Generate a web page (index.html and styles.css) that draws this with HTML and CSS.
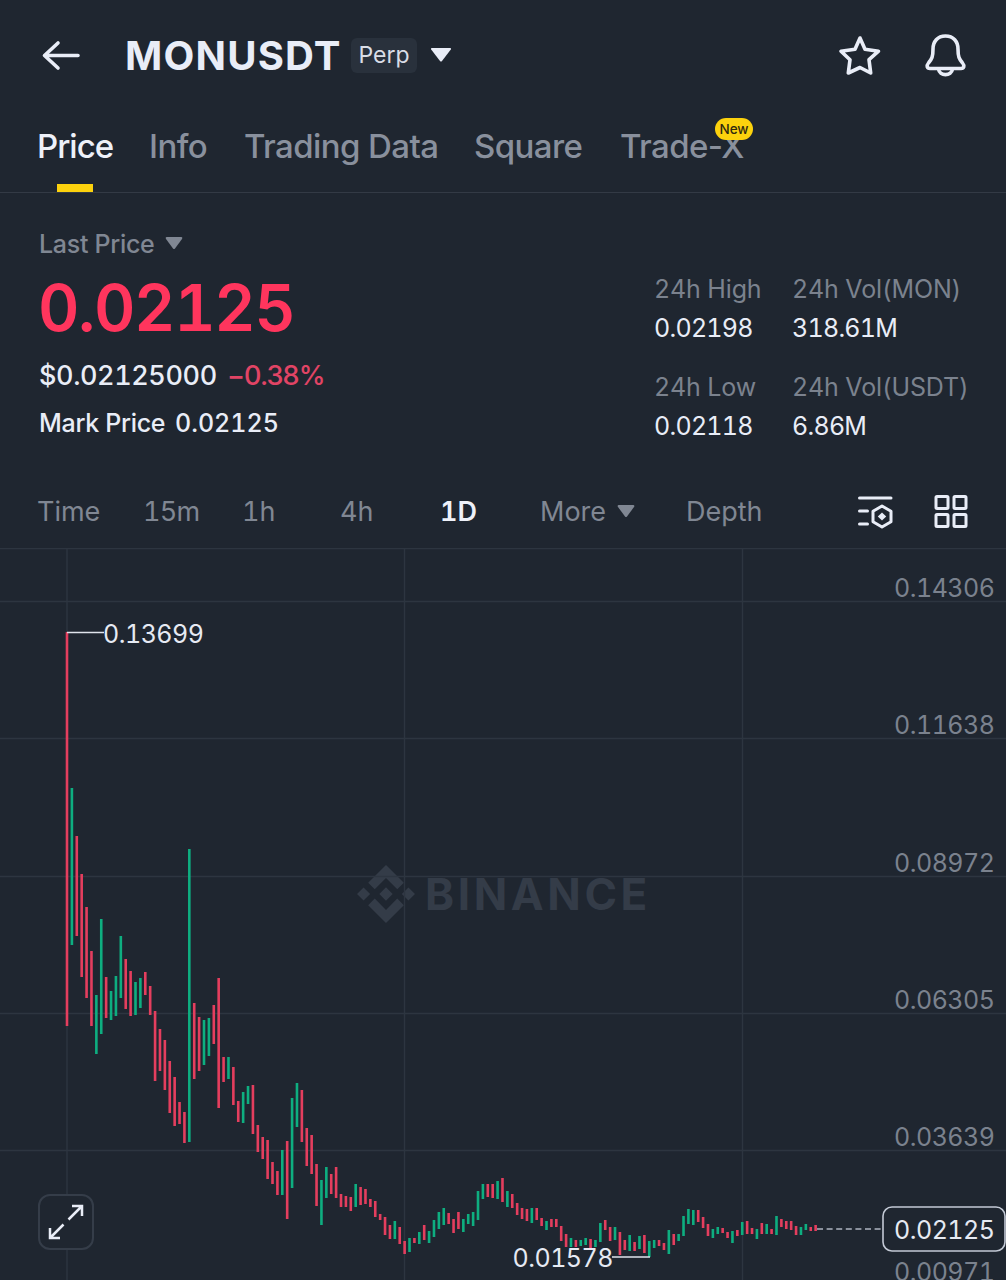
FILE: index.html
```html
<!DOCTYPE html>
<html lang="en">
<head>
    <meta charset="UTF-8">
    <meta name="viewport" content="width=device-width, initial-scale=1.0">
    <title>MONUSDT Perp</title>
    <link rel="stylesheet" href="styles.css">
</head>
<body>
    <header class="header">
        <svg class="back" width="40" height="32" viewBox="0 0 40 32"><path d="M37 16.500H3.500M17 4L3.500 16.500 17 29"/></svg>
        <h1>MONUSDT</h1>
        <span class="perp">Perp</span>
        <svg class="arrow-big" width="22" height="16" viewBox="0 0 22 16"><path d="M1.500 1h19q1 .5.3 1.500L12 14q-1 1-2 0L1.200 2.500Q.5 1.500 1.500 1z"/></svg>
        <div class="header-icons">
            <svg width="46" height="46" viewBox="0 0 46 46"><path d="M23 6l5 11.200 13.500 2-9.500 8.500 1.700 13.300L23 35.500 11.300 41 13 27.700 4 19.200l14-2z"/></svg>
            <svg width="46" height="46" viewBox="0 0 46 46"><path d="M22.500 4C14.500 4 10 9.500 10 17c0 8-1.200 10-4.200 13.500C3 34 4 36.500 7 36.500h31c3 0 4-2.500 1.200-6C36.200 27 35 25 35 17 35 9.500 30.500 4 22.500 4z"/><path d="M15.500 37c1 7.500 13 7.500 14 0"/></svg>
        </div>
    </header>

    <nav class="tabs">
        <a class="tab active">Price</a>
        <a class="tab info">Info</a>
        <a class="tab">Trading Data</a>
        <a class="tab square">Square</a>
        <a class="tab">Trade-X<span class="badge">New</span></a>
    </nav>

    <section class="summary">
        <div class="price-box">
            <div class="last">Last Price <svg width="18" height="13" viewBox="0 0 18 13"><path d="M1.500 0h15q1.500.5.5 2L10 11.500q-1 1-2 0L1 2Q0 .5 1.500 0z"/></svg></div>
            <div class="price">0.02125</div>
            <div class="fiat"><span class="usd">$0.02125000</span><span class="change">−0.38%</span></div>
            <div class="mark"><span>Mark Price</span><span class="mark-value">0.02125</span></div>
        </div>
        <dl class="stats">
            <div><dt>24h High</dt><dd>0.02198</dd></div>
            <div><dt>24h Vol(MON)</dt><dd>318.61M</dd></div>
            <div><dt>24h Low</dt><dd>0.02118</dd></div>
            <div><dt>24h Vol(USDT)</dt><dd>6.86M</dd></div>
        </dl>
    </section>

    <nav class="intervals">
        <span>Time</span>
        <span class="minutes">15m</span>
        <span>1h</span>
        <span>4h</span>
        <span class="selected">1D</span>
        <span>More <svg class="more-arrow" width="18" height="13" viewBox="0 0 18 13"><path d="M1.500 0h15q1.500.5.5 2L10 11.500q-1 1-2 0L1 2Q0 .5 1.500 0z"/></svg></span>
        <span>Depth</span>
        <svg class="tool" width="36" height="34" viewBox="0 0 36 34"><path d="M2.500 3h31.500M2.500 16h8M2.500 29h8M25 11l9 5.200v10.600L25 32l-9-5.200V16.200z"/><path class="dot" d="M25 17.500l4.200 4-4.200 4-4.200-4z"/></svg>
        <svg class="tool" width="34" height="34" viewBox="0 0 34 34"><rect x="2" y="1.500" width="12" height="12" rx="1"/><rect x="20" y="1.500" width="12" height="12" rx="1"/><rect x="2" y="19.500" width="12" height="12" rx="1"/><rect x="20" y="19.500" width="12" height="12" rx="1"/></svg>
    </nav>

    <main class="chart-box">
        <svg class="chart" width="1006" height="732" viewBox="0 548 1006 732">
            <g class="watermark">
                <path transform="translate(357 865) scale(.458)" d="M38.730 53.200l24.590-24.580 24.600 24.600 14.300-14.310L63.320 0 24.420 38.900zM0 63.310l14.300-14.310 14.310 14.310-14.310 14.300zM38.730 73.410l24.590 24.590 24.600-24.600 14.310 14.290-38.910 38.910-38.900-38.880zM98 63.310l14.300-14.310 14.310 14.300-14.310 14.320zM77.830 63.300L63.320 48.780 48.800 63.300 63.320 77.830z"/>
                <text x="425" y="909.500">BINANCE</text>
            </g>
            <path class="grid" d="M0 548.500H1006M0 601.500H1006M0 738.500H1006M0 876.500H1006M0 1013.500H1006M0 1150.500H1006M67 548V1280M404.500 548V1280M742.500 548V1280"/>
            <g id="candles"></g>
            <path class="pointer" d="M67 632.500H104M612 1257H650"/>
            <path class="current-line" d="M817 1229H883"/>
            <g class="axis">
                <text x="894" y="597">0.14306</text>
                <text x="894" y="734">0.11638</text>
                <text x="894" y="872">0.08972</text>
                <text x="894" y="1009">0.06305</text>
                <text x="894" y="1146">0.03639</text>
                <text x="894" y="1281">0.00971</text>
            </g>
            <rect class="current-box" x="883" y="1207" width="122" height="44" rx="9"/>
            <g class="values">
                <text x="103" y="642.500">0.13699</text>
                <text x="512.500" y="1267">0.01578</text>
                <text x="894" y="1239">0.02125</text>
            </g>
        </svg>
        <button class="expand" aria-label="Full screen">
            <svg width="36" height="36" viewBox="0 0 36 36"><path d="M20.500 15.500L34 2M24 2h10v10M15.500 20.500L2 34M2 24v10h10"/></svg>
        </button>
    </main>

    <script>
        // high, low, direction (1 = up, 0 = down)
        const candles = [
            [632,1026,0],[788,945,1],[836,936,0],[874,977,0],[907,998,0],[951,1026,0],[995,1054,1],[919,1034,1],
            [977,1018,0],[991,1020,1],[976,1016,1],[936,998,1],[959,1009,0],[971,1016,0],[982,1015,1],[978,1008,1],
            [972,995,0],[986,1015,0],[1011,1081,0],[1029,1071,0],[1040,1090,0],[1061,1113,0],[1077,1126,0],[1102,1124,0],
            [1112,1143,0],[849,1142,1],[1003,1079,0],[1017,1071,0],[1020,1065,1],[1018,1056,1],[1005,1044,0],[978,1108,0],
            [1057,1082,0],[1057,1079,1],[1067,1105,0],[1101,1122,0],[1092,1123,1],[1086,1104,1],[1085,1134,0],[1125,1152,0],
            [1137,1159,0],[1140,1179,0],[1162,1184,0],[1171,1195,0],[1150,1195,1],[1141,1219,0],[1098,1188,1],[1083,1127,1],
            [1090,1142,0],[1128,1166,0],[1135,1174,0],[1164,1206,0],[1180,1225,1],[1167,1198,1],[1174,1194,0],[1167,1198,0],
            [1194,1207,0],[1196,1207,0],[1197,1211,0],[1184,1207,1],[1187,1205,0],[1189,1204,0],[1199,1207,0],[1201,1217,0],
            [1214,1220,0],[1217,1235,0],[1225,1239,0],[1221,1239,1],[1227,1244,0],[1241,1254,0],[1238,1252,1],[1238,1243,0],
            [1232,1244,1],[1225,1240,0],[1231,1243,1],[1220,1237,1],[1212,1229,1],[1208,1225,1],[1213,1224,0],[1219,1233,0],
            [1212,1229,0],[1219,1232,1],[1214,1224,1],[1212,1226,1],[1191,1220,1],[1184,1199,1],[1184,1197,0],[1184,1198,0],
            [1181,1199,1],[1178,1202,0],[1191,1207,1],[1194,1208,0],[1203,1215,0],[1208,1219,0],[1209,1221,0],[1208,1223,1],
            [1208,1220,0],[1218,1226,0],[1221,1230,1],[1219,1227,0],[1219,1227,0],[1226,1241,0],[1234,1247,0],[1238,1247,1],
            [1240,1247,0],[1240,1246,1],[1238,1245,1],[1239,1249,0],[1240,1247,1],[1223,1242,1],[1220,1230,0],[1227,1241,0],
            [1227,1240,1],[1232,1255,0],[1240,1250,0],[1235,1251,1],[1242,1251,0],[1236,1249,1],[1235,1253,0],[1241,1257,1],
            [1240,1248,1],[1240,1246,0],[1243,1250,0],[1230,1254,1],[1234,1245,0],[1234,1241,1],[1216,1236,1],[1209,1224,1],
            [1210,1225,1],[1210,1222,0],[1217,1228,0],[1224,1236,0],[1229,1238,1],[1227,1234,1],[1228,1233,0],[1232,1238,0],
            [1231,1243,1],[1230,1236,0],[1222,1235,1],[1221,1234,0],[1228,1234,0],[1229,1239,1],[1223,1234,0],[1224,1234,1],
            [1229,1234,0],[1216,1235,1],[1219,1227,0],[1221,1229,0],[1221,1230,0],[1226,1235,0],[1227,1235,1],[1224,1230,1],
            [1227,1231,0],[1225,1231,0]
        ];
        const step = 4.893;
        const group = document.getElementById('candles');

        candles.forEach(function(candle, i) {
            const bar = document.createElementNS('http://www.w3.org/2000/svg', 'rect');
            bar.setAttribute('x', (67 + i * step - 1.3).toFixed(2));
            bar.setAttribute('y', candle[0]);
            bar.setAttribute('width', 2.6);
            bar.setAttribute('height', candle[1] - candle[0]);
            bar.setAttribute('class', candle[2] ? 'up' : 'down');
            group.appendChild(bar);
        });
    </script>
</body>
</html>
```
FILE: styles.css
```css
* {
    box-sizing: border-box;
}

body {
    margin: 0;
    width: 1006px;
    height: 1280px;
    overflow: hidden;
    background-color: #1f2630;
    color: #e9edf7;
    font-family: Inter, "Open Sans", sans-serif;
    font-variant-numeric: tabular-nums;
}

svg {
    display: block;
}

/* Header */
.header {
    display: flex;
    align-items: center;
    height: 110px;
    padding: 0 37px 0 41px;
}

.header svg {
    fill: none;
    stroke: #e9edf7;
    stroke-width: 3.6;
    stroke-linecap: round;
    stroke-linejoin: round;
}

h1 {
    width: 226px;
    margin: 0 0 0 44px;
    font-size: 40px;
    font-weight: 650;
    letter-spacing: 1.2px;
    white-space: nowrap;
}

.perp {
    width: 66px;
    height: 35px;
    line-height: 35px;
    border-radius: 6px;
    background-color: #29313c;
    color: #d9dde6;
    font-size: 23px;
    text-align: center;
}

.header .arrow-big {
    margin: 0 0 0 13px;
    fill: #e9edf7;
    stroke: none;
}

.header-icons {
    display: flex;
    gap: 40px;
    margin-left: auto;
}

/* Tabs */
.tabs {
    display: grid;
    grid-template-columns: 112px 95px 230px 146px 130px;
    height: 83px;
    padding-left: 37px;
    border-bottom: 1px solid #333a45;
    font-variant-numeric: normal;
}

.tab {
    position: relative;
    padding-top: 16px;
    color: #89909d;
    font-size: 33px;
    font-weight: 500;
    line-height: 40px;
    letter-spacing: -0.6px;
    white-space: nowrap;
}

.tab.active {
    color: #eef1f9;
    letter-spacing: -1px;
}

.tab.active::after {
    content: "";
    position: absolute;
    left: 20px;
    bottom: 0;
    width: 36px;
    height: 8px;
    background-color: #fcd20d;
}

.badge {
    position: absolute;
    left: 95px;
    top: 8px;
    width: 38px;
    height: 22px;
    border-radius: 11px;
    background-color: #fcd20d;
    color: #302a10;
    font-size: 13.5px;
    line-height: 22px;
    letter-spacing: 0;
    text-align: center;
}

/* Price summary */
.summary {
    display: flex;
    justify-content: space-between;
    height: 282px;
    padding: 34px 33px 0 39px;
}

.last {
    display: flex;
    align-items: center;
    gap: 11px;
    height: 34px;
    color: #808793;
    font-size: 25px;
    font-weight: 500;
    letter-spacing: -0.3px;
}

.last svg {
    margin-top: -2px;
}

.last svg,
.more-arrow {
    fill: #808793;
}

.price {
    height: 88px;
    margin-left: -1px;
    color: #ff355d;
    font-size: 64px;
    font-weight: 600;
    line-height: 93px;
    letter-spacing: -1.3px;
    white-space: nowrap;
}

.fiat,
.mark {
    display: flex;
    height: 48px;
    font-size: 27px;
    font-weight: 500;
    line-height: 54px;
    white-space: nowrap;
}

.usd {
    width: 188px;
    letter-spacing: -0.4px;
}

.change {
    color: #e14465;
    font-variant-numeric: normal;
    letter-spacing: -0.9px;
}

.mark {
    font-size: 25px;
    line-height: 52px;
}

.mark span:first-child {
    width: 136px;
    letter-spacing: -0.3px;
}

.stats {
    display: grid;
    grid-template-columns: 138px 181px;
    grid-auto-rows: 98px;
    margin: 43px 0 0;
}

.stats dt,
.stats dd {
    margin: 0;
    height: 39px;
    font-size: 25px;
    line-height: 39px;
    letter-spacing: -0.75px;
    white-space: nowrap;
}

.stats dt {
    color: #7b828e;
    letter-spacing: -0.15px;
}

/* Intervals */
.intervals {
    display: grid;
    grid-template-columns: 106px 99px 98px 100px 100px 146px 171px 77px 34px;
    align-items: center;
    height: 73px;
    padding-left: 37px;
    color: #808793;
    font-size: 27px;
    white-space: nowrap;
}

.intervals span {
    display: flex;
    align-items: center;
    gap: 11px;
}

.intervals .minutes {
    letter-spacing: -0.8px;
}

.intervals .selected {
    color: #eef1f9;
    font-weight: 600;
}

.tool {
    fill: none;
    stroke: #e9edf7;
    stroke-width: 3;
    stroke-linecap: round;
    stroke-linejoin: round;
}

.tool .dot {
    fill: #e9edf7;
    stroke: none;
}

/* Chart */
.chart-box {
    position: relative;
    height: 732px;
}

.grid {
    fill: none;
    stroke: #2d3540;
    stroke-width: 1.4;
}

.watermark {
    fill: #343c48;
    font-size: 44px;
    font-weight: 750;
    letter-spacing: 3.6px;
}

.up {
    fill: #0eae80;
}

.down {
    fill: #e43e5e;
}

.pointer {
    fill: none;
    stroke: #e0e4ec;
    stroke-width: 1.6;
}

.current-line {
    stroke: #aeb4c0;
    stroke-width: 1.6;
    stroke-dasharray: 6 3.6;
}

.current-box {
    fill: #1f2630;
    stroke: #c3c9d5;
    stroke-width: 1.6;
}

.axis,
.values {
    font-size: 25px;
    letter-spacing: -0.5px;
}

.axis {
    fill: #7b828e;
}

.values {
    fill: #e6eaf3;
}

.expand {
    position: absolute;
    left: 38px;
    bottom: 30px;
    display: flex;
    align-items: center;
    justify-content: center;
    width: 56px;
    height: 56px;
    padding: 0;
    border: 2px solid #353d49;
    border-radius: 12px;
    background-color: #1f2630;
}

.expand svg {
    fill: none;
    stroke: #e9edf7;
    stroke-width: 2.5;
}
```
